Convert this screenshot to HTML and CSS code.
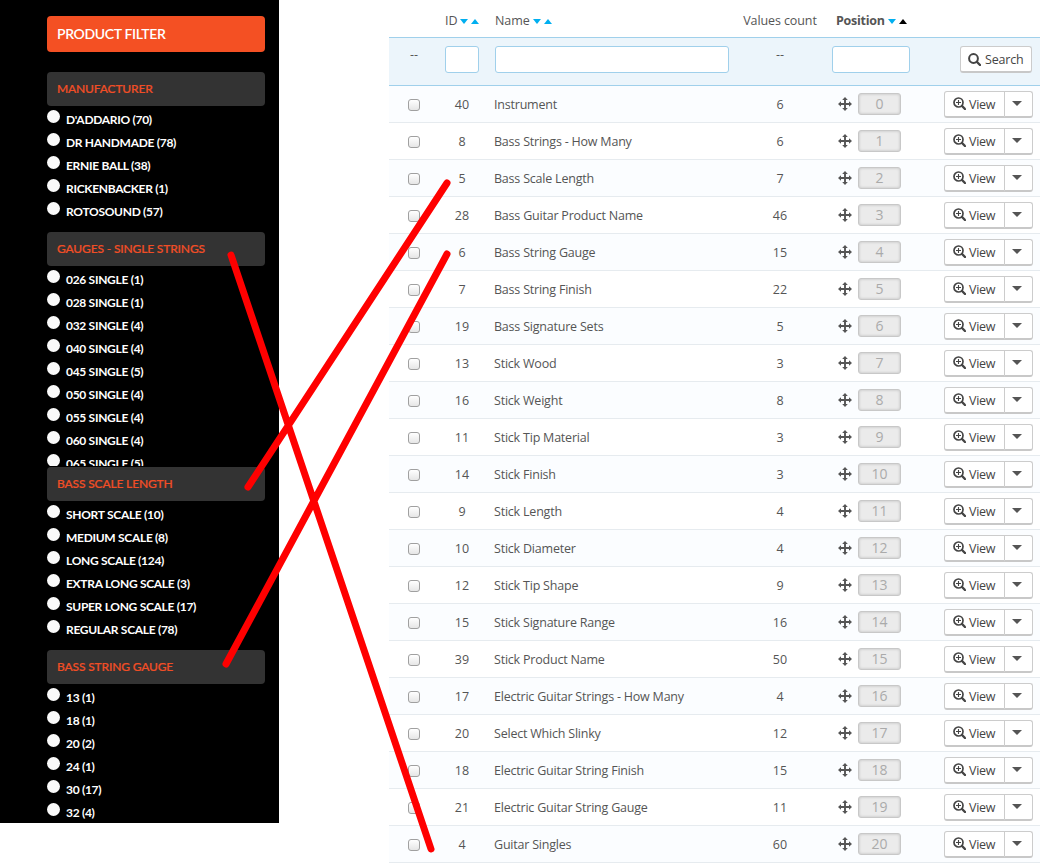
FILE: index.html
```html
<!DOCTYPE html>
<html lang="en">
  <head>
    <meta charset="UTF-8" />
    <meta name="viewport" content="width=device-width, initial-scale=1.0" />
    <title>Product Filter</title>
    <link rel="stylesheet" href="styles.css">
  </head>
  <body>
    <svg class="sprite" width="0" height="0">
      <symbol id="zoom" viewBox="0 0 13 13">
        <circle cx="5.5" cy="5.5" r="4.5" fill="none" stroke="currentColor" stroke-width="1.7" />
        <path d="M9 9L12 12" stroke="currentColor" stroke-width="2.4" stroke-linecap="round" />
        <path d="M5.5 3v5M3 5.5h5" stroke="currentColor" stroke-width="1.1" />
      </symbol>
      <symbol id="search" viewBox="0 0 13 13">
        <circle cx="5.5" cy="5.5" r="4.4" fill="none" stroke="currentColor" stroke-width="2" />
        <path d="M9 9L12 12" stroke="currentColor" stroke-width="2.4" stroke-linecap="round" />
      </symbol>
      <symbol id="move" viewBox="0 0 14 14">
        <path d="M7 2v10M2 7h10" stroke="currentColor" stroke-width="1.9" />
        <path d="M7 0l2.8 3H4.2zM7 14l2.8-3H4.2zM0 7l3-2.8v5.6zM14 7l-3-2.8v5.6z" fill="currentColor" />
      </symbol>
    </svg>

    <div class="page">
      <aside class="sidebar">
        <h1>Product Filter</h1>

        <h2>Manufacturer</h2>
        <ul>
          <li>D'Addario (70)</li>
          <li>DR Handmade (78)</li>
          <li>Ernie Ball (38)</li>
          <li>Rickenbacker (1)</li>
          <li>Rotosound (57)</li>
        </ul>

        <h2>Gauges - Single Strings</h2>
        <ul class="scroll">
          <li>026 Single (1)</li>
          <li>028 Single (1)</li>
          <li>032 Single (4)</li>
          <li>040 Single (4)</li>
          <li>045 Single (5)</li>
          <li>050 Single (4)</li>
          <li>055 Single (4)</li>
          <li>060 Single (4)</li>
          <li>065 Single (5)</li>
        </ul>

        <h2>Bass Scale Length</h2>
        <ul>
          <li>Short Scale (10)</li>
          <li>Medium Scale (8)</li>
          <li>Long Scale (124)</li>
          <li>Extra Long Scale (3)</li>
          <li>Super Long Scale (17)</li>
          <li>Regular Scale (78)</li>
        </ul>

        <h2>Bass String Gauge</h2>
        <ul>
          <li>13 (1)</li>
          <li>18 (1)</li>
          <li>20 (2)</li>
          <li>24 (1)</li>
          <li>30 (17)</li>
          <li>32 (4)</li>
        </ul>
      </aside>

      <main class="features">
        <div class="row head">
          <span></span>
          <span class="sort">ID <i class="down"></i><i class="up"></i></span>
          <span class="sort name">Name <i class="down"></i><i class="up"></i></span>
          <span class="center">Values count</span>
          <span class="sort position active">Position <i class="down"></i><i class="up"></i></span>
          <span></span>
        </div>
        <div class="row filters">
          <span class="dash">--</span>
          <input class="filter-id" type="text" aria-label="ID" />
          <input class="filter-name" type="text" aria-label="Name" />
          <span class="dash">--</span>
          <input class="filter-position" type="text" aria-label="Position" />
          <button class="btn search"><svg width="13" height="13"><use href="#search" /></svg><span>Search</span></button>
        </div>
        <div id="rows"></div>
      </main>
    </div>

    <svg class="links" width="1049" height="863">
      <path d="M231 255L431 849M447 183L248 487M447 254L226 664" />
    </svg>

    <script>
      // id, name, values count
      const features = [
        [40, "Instrument", 6],
        [8, "Bass Strings - How Many", 6],
        [5, "Bass Scale Length", 7],
        [28, "Bass Guitar Product Name", 46],
        [6, "Bass String Gauge", 15],
        [7, "Bass String Finish", 22],
        [19, "Bass Signature Sets", 5],
        [13, "Stick Wood", 3],
        [16, "Stick Weight", 8],
        [11, "Stick Tip Material", 3],
        [14, "Stick Finish", 3],
        [9, "Stick Length", 4],
        [10, "Stick Diameter", 4],
        [12, "Stick Tip Shape", 9],
        [15, "Stick Signature Range", 16],
        [39, "Stick Product Name", 50],
        [17, "Electric Guitar Strings - How Many", 4],
        [20, "Select Which Slinky", 12],
        [18, "Electric Guitar String Finish", 15],
        [21, "Electric Guitar String Gauge", 11],
        [4, "Guitar Singles", 60],
      ];

      document.getElementById("rows").innerHTML = features
        .map(
          ([id, name, count], position) => `
            <div class="row item">
              <input class="check" type="checkbox" aria-label="${name}" />
              <span class="center">${id}</span>
              <span class="name">${name}</span>
              <span class="center">${count}</span>
              <span class="drag">
                <svg width="14" height="14"><use href="#move" /></svg>
                <span class="badge">${position}</span>
              </span>
              <span class="btn-group">
                <button class="btn view"><svg width="13" height="13"><use href="#zoom" /></svg><span>View</span></button>
                <button class="btn toggle" aria-label="More"><i class="down"></i></button>
              </span>
            </div>`
        )
        .join("");
    </script>
  </body>
</html>
```

FILE: styles.css
```css
* {
  box-sizing: border-box;
}
body {
  margin: 0;
  background-color: #fff;
  color: #555;
  font: 12.5px/18px "Open Sans", sans-serif;
  overflow: hidden;
}
.sprite {
  position: absolute;
}
.page {
  display: flex;
  align-items: flex-start;
  gap: 110px;
}

/* storefront filter */
.sidebar {
  width: 279px;
  height: 823px;
  padding: 16px 14px 0 47px;
  overflow: hidden;
  background-color: #000;
  color: #fff;
  font-family: Lato, sans-serif;
  text-transform: uppercase;
}
.sidebar h1 {
  height: 36px;
  margin: 0 0 20px;
  padding-left: 10px;
  border-radius: 4px;
  background-color: #f45023;
  font-size: 14px;
  font-weight: 600;
  line-height: 35px;
  letter-spacing: -0.35px;
}
.sidebar h2 {
  height: 34px;
  margin: 0;
  padding-left: 10px;
  border-radius: 4px;
  background-color: #333;
  color: #f04e26;
  font-size: 12px;
  font-weight: 500;
  line-height: 34px;
  letter-spacing: -0.15px;
  -webkit-text-stroke: 0.2px #f04e26;
}
.sidebar ul {
  margin: 0;
  padding: 2px 0 9px;
  list-style: none;
}
.sidebar .scroll {
  height: 200px;
  margin-bottom: 1px;
  padding-bottom: 0;
  overflow: hidden;
}
.sidebar li {
  display: flex;
  gap: 6px;
  height: 23px;
  font-size: 12px;
  font-weight: 700;
  line-height: 24px;
  letter-spacing: -0.3px;
}
.sidebar li::before {
  content: "";
  width: 13px;
  height: 13px;
  margin-top: 2px;
  border-radius: 50%;
  background-color: #fafafa;
}

/* back office list */
.features {
  width: 651px;
}
.row {
  display: grid;
  grid-template-columns: 50px 46px 250px 90px 110px 105px;
  align-items: center;
}
.head {
  height: 37px;
  padding-top: 5px;
  letter-spacing: -0.1px;
}
.filters {
  height: 49px;
  border-top: 1px solid #a0d0eb;
  border-bottom: 1px solid #a0d0eb;
  background-color: #ecf5fb;
  align-items: start;
  padding-top: 8px;
}
.item {
  height: 37px;
  border-bottom: 1px solid #e6ebef;
}
.item:nth-child(odd) {
  background-color: #fbfdff;
}
.center,
.dash {
  text-align: center;
}
.name {
  padding-left: 9px;
}
.item .center,
.item .name {
  padding-top: 2px;
}
.item .name {
  letter-spacing: -0.21px;
}
.sort {
  display: flex;
  align-items: center;
  gap: 3px;
  padding-left: 6px;
}
.sort.name {
  padding-left: 10px;
}
.sort.position {
  padding-left: 11px;
  letter-spacing: -0.25px;
}
.active {
  font-weight: 700;
}
.down,
.up {
  flex: none;
  border: 4.5px solid transparent;
}
.down {
  border-top: 5px solid #00aff0;
  border-bottom: 0;
}
.up {
  border-bottom: 5px solid #00aff0;
  border-top: 0;
}
.active .up {
  border-bottom-color: #000;
}
.filters input {
  height: 27px;
  border: 1px solid #a0d0eb;
  border-radius: 3px;
  background-color: #fff;
}
.filter-id {
  width: 34px;
  margin-left: 6px;
}
.filter-name {
  width: 234px;
  margin-left: 10px;
}
.filter-position {
  width: 78px;
  margin-left: 7px;
}
.check {
  appearance: none;
  width: 12px;
  height: 12px;
  margin: 1px 0 0 19px;
  border: 1px solid #a0a0a0;
  border-radius: 3px;
  background: linear-gradient(#fff, #e6e6e6);
}
.drag {
  display: flex;
  align-items: center;
  gap: 6px;
  padding-left: 13px;
  color: #555;
}
.badge {
  width: 43px;
  height: 22px;
  border: 1px solid #c8c8c8;
  border-radius: 3px;
  background-color: #ebebeb;
  box-shadow: inset 0 0 3px rgba(0, 0, 0, 0.2);
  color: #aaa;
  font-size: 14px;
  line-height: 20px;
  text-align: center;
}
.btn {
  display: flex;
  align-items: center;
  height: 27px;
  padding: 0;
  border: 1px solid #ccc;
  border-bottom: 2px solid #c8c8c8;
  border-radius: 3px;
  background-color: #fff;
  color: #444;
  font: inherit;
  letter-spacing: -0.3px;
}
.btn span {
  padding-top: 2px;
}
.search {
  width: 72px;
  margin-left: 25px;
  padding-left: 7px;
  gap: 4px;
  letter-spacing: -0.2px;
}
.btn-group {
  display: flex;
  padding-left: 9px;
}
.view {
  width: 61px;
  padding-left: 8px;
  gap: 3px;
  border-radius: 3px 0 0 3px;
}
.toggle {
  width: 29px;
  margin-left: -1px;
  padding-left: 7px;
  border-radius: 0 3px 3px 0;
}
.toggle .down {
  border-width: 5px 5px 0;
  border-top-color: #555;
}

/* lines joining filter blocks to their list entries */
.links {
  position: absolute;
  top: 0;
  left: 0;
  fill: none;
  stroke: #f00;
  stroke-width: 7;
  stroke-linecap: round;
  pointer-events: none;
}
```
